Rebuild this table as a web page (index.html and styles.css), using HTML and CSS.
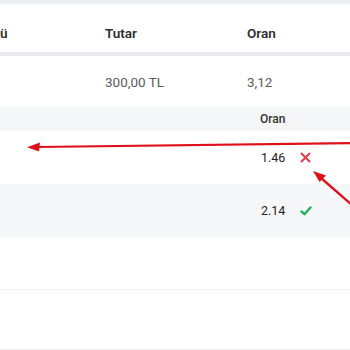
FILE: index.html
```html
<!DOCTYPE html>
<html>
<head>
<meta charset="utf-8">
<link rel="stylesheet" href="styles.css">
</head>
<body>
<div class="page">
  <div class="topband"></div>
  <div class="row head">
    <div class="c1">ü</div>
    <div class="c2">Tutar</div>
    <div class="c3">Oran</div>
  </div>
  <div class="row body">
    <div class="c1"></div>
    <div class="c2">300,00 TL</div>
    <div class="c3">3,12</div>
  </div>
  <div class="sub">
    <div class="subhead">
      <div></div>
      <div class="val">Oran</div>
      <div></div>
    </div>
    <div class="subrow white">
      <div></div>
      <div class="val">1.46</div>
      <div class="icon">
        <svg width="11" height="11" viewBox="0 0 11 11"><path d="M1.5 1.5 L9.5 9.5 M9.5 1.5 L1.5 9.5" stroke="#e8394f" stroke-width="2" stroke-linecap="round"/></svg>
      </div>
    </div>
    <div class="subrow grey">
      <div></div>
      <div class="val">2.14</div>
      <div class="icon">
        <svg width="12" height="10" viewBox="0 0 12 10"><path d="M1.5 5.5 L4.5 8.2 L10.5 1.5" fill="none" stroke="#1fb25a" stroke-width="2.4" stroke-linecap="round" stroke-linejoin="round"/></svg>
      </div>
    </div>
    <div class="blank"></div>
    <div class="blank2"></div>
  </div>
  <svg class="arrows" width="350" height="350" viewBox="0 0 350 350">
    <path d="M352 143 L38 147" stroke="#e0101a" stroke-width="2.2" fill="none"/>
    <path d="M27 147.2 L40 142.5 L39 151.5 Z" fill="#e0101a"/>
    <path d="M352 205 L321 178" stroke="#e0101a" stroke-width="2.4" fill="none"/>
    <path d="M313 171 L326 175.5 L319.5 182 Z" fill="#e0101a"/>
  </svg>
</div>
</body>
</html>
```
FILE: styles.css
```css
html, body {
  margin: 0;
  padding: 0;
  background: #ffffff;
}
.page {
  position: relative;
  width: 350px;
  height: 350px;
  overflow: hidden;
  font-family: Roboto, "Liberation Sans", sans-serif;
}
.topband {
  height: 4px;
  background: #eff0f2;
}
.row {
  display: grid;
  grid-template-columns: 105px 142px 1fr;
  align-items: center;
}
.head {
  height: 48px;
  box-sizing: border-box;
  padding-top: 9px;
  font-size: 13.5px;
  font-weight: 600;
  color: #2e2e2e;
  border-bottom: 4px solid #ececee;
  height: 52px;
}
.body {
  height: 51px;
  font-size: 13.5px;
  color: #5c5c5c;
}
.sub {
  display: flex;
  flex-direction: column;
}
.subhead, .subrow {
  display: grid;
  grid-template-columns: 260px 39px 1fr;
  align-items: center;
}
.subhead {
  height: 24px;
  background: #f5f6f8;
  font-size: 12px;
  font-weight: 500;
  color: #333;
}
.subrow {
  height: 53px;
  font-size: 12.5px;
  color: #222;
}
.subrow .val {
  padding-left: 1px;
}
.grey {
  background: #f6f7f9;
}
.icon {
  display: flex;
  align-items: center;
  padding-left: 1px;
}
.blank {
  height: 52px;
  border-bottom: 1px solid #efefef;
}
.blank2 {
  height: 59px;
  border-bottom: 1px solid #efefef;
}
.arrows {
  position: absolute;
  left: 0;
  top: 0;
}
```
